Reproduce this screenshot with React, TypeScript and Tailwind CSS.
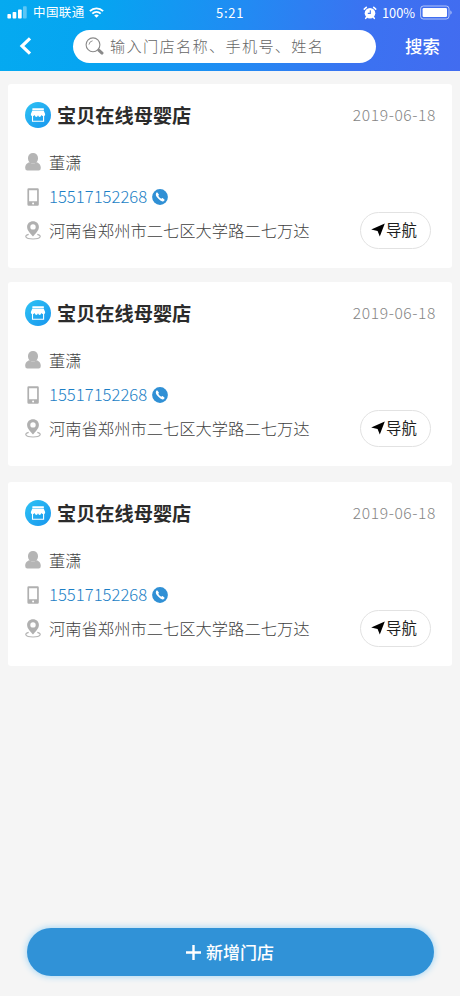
import type { ReactNode } from "react";

type Store = { id: number; name: string; date: string; contact: string; phone: string; address: string };

const stores: Store[] = [1, 2, 3].map((id) => ({
  id,
  name: "宝贝在线母婴店",
  date: "2019-06-18",
  contact: "董潇",
  phone: "15517152268",
  address: "河南省郑州市二七区大学路二七万达",
}));

function StatusBar() {
  return (
    <div className="flex h-[25px] items-center pl-[7px] pr-[7px] text-white">
      <svg width="20" height="13" viewBox="0 0 20 13" fill="currentColor">
        <rect x="0.4" y="8" width="3.6" height="4.6" rx="0.8" />
        <rect x="5.6" y="6" width="3.7" height="6.6" rx="0.8" />
        <rect x="11" y="3.5" width="3.7" height="9.1" rx="0.8" />
        <rect x="16" y="0.3" width="3.7" height="12.3" rx="0.8" opacity="0.35" />
      </svg>
      <span className="ml-[6px] w-[52px] whitespace-nowrap text-[12.5px] tracking-[0.4px]">中国联通</span>
      <svg className="ml-[4px]" width="15" height="11" viewBox="0 0 15 11" fill="none" stroke="currentColor" strokeWidth="1.9">
        <path d="M0.9 4.2C4.6 0.4 10.4 0.4 14.1 4.2" />
        <path d="M3.3 6.7C5.7 4.3 9.3 4.3 11.7 6.7" />
        <path d="M7.5 10.7L5.2 8.4C6.4 7.2 8.6 7.2 9.8 8.4Z" fill="currentColor" stroke="none" />
      </svg>
      <span className="ml-[112px] w-[32px] whitespace-nowrap text-[13px] tracking-[0.7px]">5:21</span>
      <svg className="ml-[115px]" width="14" height="14" viewBox="0 0 14 14">
        <circle cx="7" cy="7.2" r="5.3" fill="currentColor" />
        <path d="M1.3 3.2L3.3 1.4M12.7 3.2L10.7 1.4M3.4 11.4L2.7 12.4M10.6 11.4L11.3 12.4" stroke="currentColor" strokeWidth="1.6" strokeLinecap="round" />
        <path d="M7.3 4.2V7.4H4.8" fill="none" stroke="#3f77f1" strokeWidth="1.1" />
      </svg>
      <span className="ml-[5px] w-[34px] whitespace-nowrap text-[12.8px]">100%</span>
      <svg className="ml-[4px]" width="33" height="15" viewBox="0 0 33 15">
        <rect x="0.6" y="1" width="28.4" height="13" rx="2.8" fill="none" stroke="currentColor" strokeOpacity="0.6" />
        <rect x="2.6" y="3" width="24.4" height="9" rx="1.2" fill="currentColor" />
        <path d="M30.4 5.2Q33 7.5 30.4 9.8Z" fill="currentColor" opacity="0.6" />
      </svg>
    </div>
  );
}

function Header() {
  return (
    <header className="h-[71px] bg-linear-[100deg,#05aaf0_0%,#06a4f1_22%,#218bf3_52%,#3b72f1_78%,#426cf0_100%]">
      <StatusBar />
      <div className="flex h-[42px] items-center">
        <button className="ml-[19px] text-white">
          <svg width="13" height="18" viewBox="0 0 13 18" fill="none" stroke="currentColor" strokeWidth="3.2">
            <path d="M11 1.3L3 9L11 16.7" />
          </svg>
        </button>
        <div className="ml-[41px] flex h-[33px] w-[303px] items-center rounded-full bg-white pl-[12px] text-[#8a8a8a]">
          <svg width="19" height="18" viewBox="0 0 19 18" fill="none" stroke="currentColor">
            <circle cx="8" cy="7.8" r="6.9" strokeWidth="1.1" />
            <path d="M4 7.6Q4.3 4.3 7.6 3.8" strokeWidth="0.9" />
            <path d="M12.8 12.5L14 13.5" strokeWidth="1.4" />
            <path d="M14 13.4L17 16.1" strokeWidth="3" strokeLinecap="round" />
          </svg>
          <span className="mb-px ml-[6px] whitespace-nowrap text-[15.2px] font-light tracking-[1.3px] text-[#666]">
            输入门店名称、手机号、姓名
          </span>
        </div>
        <button className="ml-[29px] whitespace-nowrap text-[17.4px] font-medium text-white">搜索</button>
      </div>
    </header>
  );
}

function StoreIcon() {
  return (
    <svg width="26" height="26" viewBox="0 0 26 26">
      <defs>
        <linearGradient id="store-bg" x1="0" y1="0" x2="1" y2="1">
          <stop offset="0" stopColor="#2fc3f4" />
          <stop offset="1" stopColor="#1795ee" />
        </linearGradient>
      </defs>
      <circle cx="13" cy="13" r="13" fill="url(#store-bg)" />
      <rect x="7.2" y="6.3" width="11.8" height="1.7" rx="0.7" fill="#fff" />
      <path d="M7.3 8.4H18.7L20.2 12.2Q20.2 14.2 18.3 14.2Q16.9 14.2 16.5 13.1Q16 14.9 14.8 14.9Q13.5 14.9 13 13.3Q12.5 14.9 11.2 14.9Q10 14.9 9.5 13.1Q9.1 14.2 7.7 14.2Q5.8 14.2 5.8 12.2Z" fill="#fff" />
      <path d="M7.5 13.5V19.2H18.6V13.5" fill="none" stroke="#fff" strokeWidth="1.1" />
    </svg>
  );
}

function PersonIcon() {
  return (
    <svg width="16" height="18" viewBox="0 0 16 18" fill="#b5b5b5">
      <rect x="3" y="0" width="10" height="10.6" rx="4.8" />
      <path d="M0.2 15C0.2 11.4 2.4 10 4.3 9.3Q8 11.8 11.7 9.3C13.6 10 15.8 11.4 15.8 15Q15.8 17.6 13.6 17.6H2.4Q0.2 17.6 0.2 15Z" />
    </svg>
  );
}

function MobileIcon() {
  return (
    <svg width="16" height="18" viewBox="0 0 16 18">
      <path fill="#b0b0b0" fillRule="evenodd" d="M3.6 0.3H12.6Q13.8 0.3 13.8 1.5V16.5Q13.8 17.7 12.6 17.7H3.6Q2.4 17.7 2.4 16.5V1.5Q2.4 0.3 3.6 0.3ZM4.1 2.3V13.2H12.1V2.3ZM8.1 14.4A1 1 0 1 0 8.1 16.4A1 1 0 1 0 8.1 14.4Z" />
    </svg>
  );
}

function PlaceIcon() {
  return (
    <svg width="16" height="19" viewBox="0 0 16 19">
      <path d="M3.7 13.4C-0.8 14.4 -0.5 18 8 18S16.8 14.4 12.3 13.4" fill="none" stroke="#b5b5b5" strokeWidth="1.2" />
      <path fill="#b0b0b0" fillRule="evenodd" d="M8 0.2C11.4 0.2 13.9 2.6 13.9 5.9C13.9 9.7 10.4 12.2 8 15.6C5.6 12.2 2.1 9.7 2.1 5.9C2.1 2.6 4.6 0.2 8 0.2ZM8 3.2A2.7 2.7 0 1 0 8 8.6A2.7 2.7 0 1 0 8 3.2Z" />
    </svg>
  );
}

function InfoRow({ icon, children }: { icon: ReactNode; children: ReactNode }) {
  return (
    <div className="flex h-[34px] items-center gap-2 whitespace-nowrap text-[16.3px] font-light text-[#3f3f3f]">
      {icon}
      {children}
    </div>
  );
}

function StoreCard({ store }: { store: Store }) {
  return (
    <section className="h-[184px] rounded-[3px] bg-white pl-[17px] pr-[16px] pt-[14px]">
      <div className="flex h-[34px] items-center whitespace-nowrap">
        <StoreIcon />
        <h2 className="ml-[6px] text-[19.2px] font-bold text-[#2b2b2b]">{store.name}</h2>
        <span className="ml-auto text-[15.6px] font-light tracking-[0.6px] text-[#858585]">{store.date}</span>
      </div>
      <div className="mt-[13px]">
        <InfoRow icon={<PersonIcon />}>{store.contact}</InfoRow>
        <div className="pt-px">
          <InfoRow icon={<MobileIcon />}>
            <span className="text-[16.7px] text-[#1c7fc6]">{store.phone}</span>
            <svg className="-ml-[3px]" width="16" height="16" viewBox="0 0 16 16">
              <circle cx="8" cy="8" r="7.9" fill="#3090d5" />
              <path d="M5.3 3.4L6.9 5.4Q7 6 6.2 6.7Q7.2 8.7 9.3 9.8Q10 9 10.6 9.1L12.6 10.7Q12.8 11.3 11.5 12.2Q9.6 13.1 6.4 9.8Q3.1 6.5 4 4.4Q4.8 3.1 5.3 3.4Z" fill="#fff" />
            </svg>
          </InfoRow>
        </div>
        <div className="-mt-px">
          <InfoRow icon={<PlaceIcon />}>
            {store.address}
            <button className="ml-auto mr-[5px] flex h-[37px] w-[71px] shrink-0 items-center rounded-full border border-[#e2e2e2] pl-[10px] text-[15.4px] font-normal text-[#1f1f1f]">
              <svg className="mr-[1px]" width="14" height="14" viewBox="0 0 14 14">
                <path d="M13.8 0.4L8.8 13.6L6.6 8L0.2 6.5Z" fill="#000" />
              </svg>
              导航
            </button>
          </InfoRow>
        </div>
      </div>
    </section>
  );
}

export default function App() {
  return (
    <div className="flex h-[996px] w-[460px] flex-col overflow-hidden bg-[#f5f5f5] font-['Noto_Sans_CJK_SC',sans-serif]">
      <Header />
      <main className="flex flex-col gap-[14px] pl-[8px] pr-[8px] pt-[13px] [&>section:last-child]:mt-[2px]">
        {stores.map((store) => (
          <StoreCard key={store.id} store={store} />
        ))}
      </main>
      <button className="mx-auto mb-[20px] mt-auto flex h-[48px] w-[407px] items-center justify-center rounded-full bg-[#3092d7] text-[17px] font-medium text-white shadow-[0_0_6px_1px_#a9d8f5]">
        <svg className="mr-[5px]" width="15" height="15" viewBox="0 0 15 15" stroke="currentColor" strokeWidth="2.4">
          <path d="M7.5 0V15M0 7.5H15" />
        </svg>
        新增门店
      </button>
    </div>
  );
}
